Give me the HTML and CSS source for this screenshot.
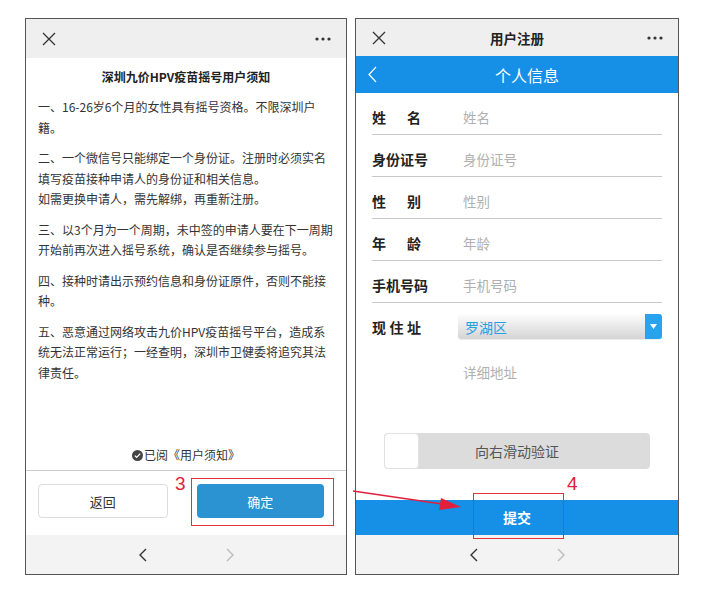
FILE: index.html
```html
<!DOCTYPE html>
<html lang="zh-CN">
<head>
  <meta charset="UTF-8" />
  <meta name="viewport" content="width=device-width, initial-scale=1.0"/>
  <title>HPV疫苗摇号注册流程</title>
  <link rel="stylesheet" href="styles.css">
</head>
<body>
  <div class="screens">
    <!-- 第一屏：用户须知 -->
    <div class="phone notice">
      <div class="topbar">
        <svg class="ico-close" width="14" height="14" viewBox="0 0 14 14"><path d="M1 1L13 13M13 1L1 13" stroke="#333" stroke-width="1.3" fill="none"/></svg>
        <div class="topbar-title"></div>
        <svg class="ico-more" width="16" height="4" viewBox="0 0 16 4"><circle cx="2" cy="2" r="1.6" fill="#333"/><circle cx="8" cy="2" r="1.6" fill="#333"/><circle cx="14" cy="2" r="1.6" fill="#333"/></svg>
      </div>

      <div class="notice-body">
        <h3 class="notice-title">深圳九价HPV疫苗摇号用户须知</h3>
        <p>一、16-26岁6个月的女性具有摇号资格。不限深圳户籍。</p>
        <p>二、一个微信号只能绑定一个身份证。注册时必须实名填写疫苗接种申请人的身份证和相关信息。<br>如需更换申请人，需先解绑，再重新注册。</p>
        <p>三、以3个月为一个周期，未中签的申请人要在下一周期开始前再次进入摇号系统，确认是否继续参与摇号。</p>
        <p>四、接种时请出示预约信息和身份证原件，否则不能接种。</p>
        <p>五、恶意通过网络攻击九价HPV疫苗摇号平台，造成系统无法正常运行；一经查明，深圳市卫健委将追究其法律责任。</p>
        <div class="agree">
          <svg class="ico-check" width="11" height="11" viewBox="0 0 11 11"><circle cx="5.5" cy="5.5" r="5.5" fill="#444"/><path d="M2.8 5.6L4.7 7.4L8.2 3.6" stroke="#fff" stroke-width="1.3" fill="none"/></svg>已阅《用户须知》
        </div>
      </div>

      <div class="actions">
        <button class="btn btn-back">返回</button>
        <button class="btn btn-ok">确定</button>
      </div>

      <div class="navbar">
        <svg width="8" height="14" viewBox="0 0 8 14"><path d="M7 1L1 7L7 13" stroke="#333" stroke-width="1.4" fill="none"/></svg>
        <svg width="8" height="14" viewBox="0 0 8 14"><path d="M1 1L7 7L1 13" stroke="#bbb" stroke-width="1.4" fill="none"/></svg>
      </div>
    </div>

    <!-- 第二屏：个人信息 -->
    <div class="phone register">
      <div class="topbar">
        <svg class="ico-close" width="14" height="14" viewBox="0 0 14 14"><path d="M1 1L13 13M13 1L1 13" stroke="#333" stroke-width="1.3" fill="none"/></svg>
        <div class="topbar-title">用户注册</div>
        <svg class="ico-more" width="16" height="4" viewBox="0 0 16 4"><circle cx="2" cy="2" r="1.6" fill="#333"/><circle cx="8" cy="2" r="1.6" fill="#333"/><circle cx="14" cy="2" r="1.6" fill="#333"/></svg>
      </div>

      <div class="bluebar">
        <svg class="ico-back" width="9" height="17" viewBox="0 0 9 17"><path d="M8 1L1 8.5L8 16" stroke="#fff" stroke-width="1.2" fill="none"/></svg>
        <div class="bluebar-title">个人信息</div>
      </div>

      <div class="form">
        <div class="field">
          <label><span class="spread">姓名</span></label>
          <input type="text" placeholder="姓名">
        </div>
        <div class="field">
          <label>身份证号</label>
          <input type="text" placeholder="身份证号">
        </div>
        <div class="field">
          <label><span class="spread">性别</span></label>
          <input type="text" placeholder="性别">
        </div>
        <div class="field">
          <label><span class="spread">年龄</span></label>
          <input type="text" placeholder="年龄">
        </div>
        <div class="field">
          <label>手机号码</label>
          <input type="text" placeholder="手机号码">
        </div>
        <div class="field addr">
          <label><span class="spread">现住址</span></label>
          <div class="select">
            <span>罗湖区</span>
            <span class="select-arrow"><svg width="7" height="5" viewBox="0 0 7 5"><path d="M0 0H7L3.5 5Z" fill="#fff"/></svg></span>
          </div>
        </div>
        <div class="detail">详细地址</div>
      </div>

      <div class="slider">
        <div class="slider-knob"></div>
        向右滑动验证
      </div>

      <div class="submit">提交</div>

      <div class="navbar">
        <svg width="8" height="14" viewBox="0 0 8 14"><path d="M7 1L1 7L7 13" stroke="#333" stroke-width="1.4" fill="none"/></svg>
        <svg width="8" height="14" viewBox="0 0 8 14"><path d="M1 1L7 7L1 13" stroke="#bbb" stroke-width="1.4" fill="none"/></svg>
      </div>
    </div>
  </div>

  <!-- 标注 -->
  <div class="marks">
    <div class="mark-box mark-ok"></div>
    <div class="mark-num num-3">3</div>
    <div class="mark-box mark-submit"></div>
    <div class="mark-num num-4">4</div>
    <svg class="mark-arrow" width="703" height="604" viewBox="0 0 703 604">
      <path d="M353 491L442 504" stroke="#e3203c" stroke-width="1.6" fill="none"/>
      <polygon points="461,507 441,498 439,510" fill="#e3203c"/>
    </svg>
  </div>
</body>
</html>
```

FILE: styles.css
```css
* {
  box-sizing: border-box;
  margin: 0;
  padding: 0;
}

body {
  font-family: "Noto Sans CJK SC", "Noto Sans", sans-serif;
  color: #222;
  background-color: #fff;
  position: relative;
  width: 703px;
  height: 604px;
  overflow: hidden;
}

.screens {
  display: flex;
  gap: 8px;
  padding: 18px 0 0 25px;
}

.phone {
  border: 1px solid #555;
  height: 557px;
  display: flex;
  flex-direction: column;
  background-color: #fff;
}

.notice {
  width: 322px;
}

.register {
  width: 324px;
}

/* 顶部栏 */
.topbar {
  background-color: #efeff0;
  display: grid;
  grid-template-columns: 40px 1fr 40px;
  align-items: center;
  flex-shrink: 0;
}

.notice .topbar {
  height: 39px;
}

.register .topbar {
  height: 37px;
}

.ico-close {
  margin-left: 16px;
}

.ico-more {
  justify-self: end;
  margin-right: 15px;
}

.topbar-title {
  text-align: center;
  font-size: 13.5px;
  font-weight: 700;
  color: #222;
}

/* 用户须知 */
.notice-body {
  flex: 1;
  display: flex;
  flex-direction: column;
  padding: 9px 0 5px;
}

.notice-title {
  text-align: center;
  font-size: 12px;
  font-weight: 700;
  line-height: 20px;
  margin-bottom: 10px;
}

.notice-body p {
  font-size: 12px;
  line-height: 20.5px;
  color: #333;
  padding: 0 12px;
  margin-bottom: 10px;
}

.agree {
  margin-top: auto;
  text-align: center;
  font-size: 12px;
  line-height: 20px;
  color: #333;
}

.ico-check {
  vertical-align: -1px;
  margin-right: 1px;
}

.actions {
  border-top: 1px solid #ccc;
  height: 65px;
  flex-shrink: 0;
  display: flex;
  gap: 29px;
  padding: 13px 22px 0 12px;
}

.btn {
  flex: 1;
  height: 34px;
  border-radius: 4px;
  font-family: inherit;
  font-size: 13px;
}

.btn-back {
  background-color: #fff;
  border: 1px solid #ddd;
  color: #333;
}

.btn-ok {
  background-color: #2b93d1;
  border: none;
  color: #fff;
}

.navbar {
  height: 39px;
  flex-shrink: 0;
  background-color: #f3f3f4;
  display: flex;
  align-items: center;
  justify-content: center;
  gap: 79px;
}

/* 个人信息 */
.bluebar {
  height: 37px;
  flex-shrink: 0;
  background-color: #1590e6;
  display: grid;
  grid-template-columns: 40px 1fr 20px;
  align-items: center;
}

.ico-back {
  margin-left: 12px;
}

.bluebar-title {
  text-align: center;
  color: #fff;
  font-size: 16px;
}

.form {
  padding: 0 16px;
}

.field {
  display: flex;
  align-items: center;
  padding: 14px 0 7px;
  border-bottom: 1px solid #c8c8c8;
}

.field label {
  width: 86px;
  flex-shrink: 0;
  font-size: 14px;
  font-weight: 700;
  line-height: 20px;
  color: #222;
}

.spread {
  display: inline-block;
  width: 49px;
  text-align: justify;
  text-align-last: justify;
}

.field input {
  flex: 1;
  border: none;
  background: transparent;
  outline: none;
  font-family: inherit;
  font-size: 13.5px;
  line-height: 20px;
  height: 20px;
  padding: 0 5px;
  color: #333;
}

.field input::placeholder {
  color: #b0b0b0;
}

.field.addr {
  border-bottom: none;
  padding: 11px 0 0;
}

.select {
  flex: 1;
  height: 25px;
  display: flex;
  align-items: center;
  justify-content: space-between;
  border-radius: 3px;
  background: linear-gradient(#fdfdfd, #d4d4d4);
  box-shadow: 0 1px 1px rgba(0,0,0,0.08);
  color: #27a0e2;
  font-size: 14px;
  padding-left: 7px;
}

.select-arrow {
  width: 17px;
  height: 25px;
  border-radius: 0 3px 3px 0;
  background-color: #2aa3ef;
  display: flex;
  align-items: center;
  justify-content: center;
}

.detail {
  margin-top: 23px;
  padding-left: 91px;
  font-size: 13.5px;
  line-height: 20px;
  color: #b0b0b0;
}

.slider {
  position: relative;
  margin: 51px 28px 0;
  height: 36px;
  border-radius: 4px;
  background-color: #dcdcdc;
  text-align: center;
  line-height: 36px;
  font-size: 14px;
  color: #555;
}

.slider-knob {
  position: absolute;
  left: 0;
  top: 0;
  width: 35px;
  height: 36px;
  border-radius: 4px;
  border: 1px solid #e2e2e2;
  background-color: #fff;
}

.submit {
  margin-top: auto;
  height: 35px;
  flex-shrink: 0;
  background-color: #1590e6;
  color: #fff;
  text-align: center;
  line-height: 35px;
  font-size: 14px;
  font-weight: 700;
}

/* 标注 */
.marks {
  position: absolute;
  left: 0;
  top: 0;
  width: 703px;
  height: 604px;
  pointer-events: none;
}

.mark-box {
  position: absolute;
  border: 1px solid #e3303f;
}

.mark-ok {
  left: 191px;
  top: 478px;
  width: 143px;
  height: 48px;
}

.mark-submit {
  left: 473px;
  top: 493px;
  width: 91px;
  height: 46px;
}

.mark-num {
  position: absolute;
  font-family: "Liberation Sans", sans-serif;
  font-size: 19px;
  line-height: 19px;
  color: #e3203c;
}

.num-3 {
  left: 175px;
  top: 474px;
}

.num-4 {
  left: 567px;
  top: 474px;
}

.mark-arrow {
  position: absolute;
  left: 0;
  top: 0;
}
```
